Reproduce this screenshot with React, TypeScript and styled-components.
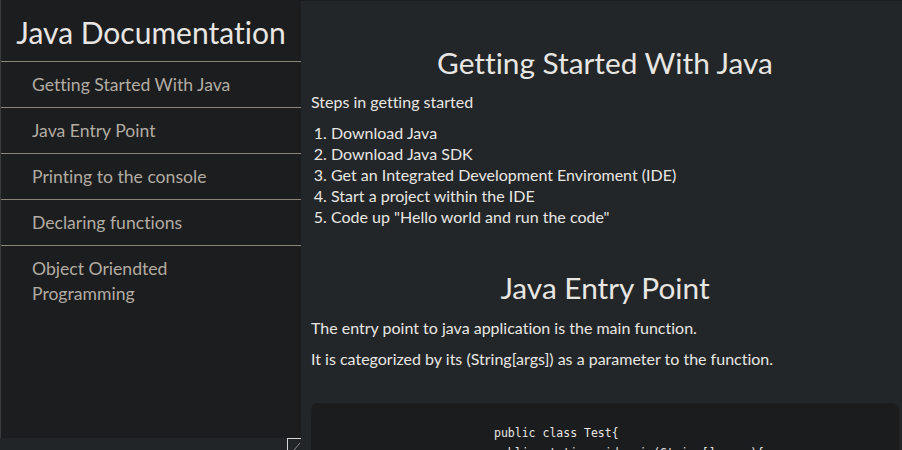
import React from "react";
import styled, { createGlobalStyle } from "styled-components";

const GlobalStyle = createGlobalStyle`
  html, body { margin: 0; padding: 0; height: 100%; overflow: hidden; }
  body {
    background: #232628;
    font-family: Lato, "Open Sans", sans-serif;
    font-variant-ligatures: none;
  }
  #root { height: 100%; }
`;

const Page = styled.div`
  display: flex;
  height: 450px;
  width: 902px;
  overflow: hidden;
`;

const SideColumn = styled.div`
  display: flex;
  flex-direction: column;
  width: 301px;
  flex: none;
  height: 450px;
`;

const Nav = styled.nav`
  flex: 1;
  background: #1c1d1f;
  border-left: 1px solid #3a3b3d;
  box-sizing: border-box;
`;

const NavHeader = styled.header`
  height: 62px;
  display: flex;
  align-items: center;
  justify-content: center;
  color: #e8e6e3;
  font-size: 30px;
  padding-top: 3px;
  box-sizing: border-box;
  border-bottom: 1px solid #8a8378;
`;

const NavLink = styled.a<{ $last?: boolean }>`
  display: block;
  padding: 10px 60px 10px 31px;
  line-height: 25px;
  font-size: 17.6px;
  color: #b2aca2;
  text-decoration: none;
  border-bottom: ${(p) => (p.$last ? "none" : "1px solid #8a8378")};
`;

const ScrollStrip = styled.div`
  height: 12px;
  display: flex;
  justify-content: flex-end;
  background: #222527;
`;

const Grip = styled.div`
  width: 14px;
  height: 12px;
  box-sizing: border-box;
  border-top: 1px solid #d6d6d6;
  border-left: 1px solid #d6d6d6;
  display: flex;
  align-items: flex-end;
  justify-content: flex-end;
`;

const Main = styled.main`
  flex: 1;
  background: #232628;
  border-top: 1px solid #1b1c1e;
  padding: 0 3px 0 10px;
  overflow: hidden;
  color: #e8e6e3;
`;

const Section = styled.section`
  display: flex;
  flex-direction: column;
`;

const Title = styled.h2<{ $first?: boolean }>`
  margin: ${(p) => (p.$first ? "44px 0 10px" : "43px 0 11px")};
  text-align: center;
  font-weight: 400;
  font-size: 29.8px;
  line-height: 36px;
`;

const Para = styled.p`
  margin: 0 0 10px;
  font-size: 16px;
  line-height: 21px;
`;

const Steps = styled.ol`
  margin: 0;
  padding-left: 20px;
  font-size: 16px;
  line-height: 21px;
`;

const Code = styled.pre`
  margin: 24px 0 0;
  background: #1b1c1e;
  border-radius: 7px;
  padding: 20px 20px 20px 183px;
  font-family: "DejaVu Sans Mono", monospace;
  font-size: 11.5px;
  line-height: 20px;
  color: #e8e6e3;
`;

const links = [
  "Getting Started With Java",
  "Java Entry Point",
  "Printing to the console",
  "Declaring functions",
  "Object Oriendted Programming",
];

export default function App() {
  return (
    <>
      <GlobalStyle />
      <Page>
        <SideColumn>
          <Nav>
            <NavHeader>Java Documentation</NavHeader>
            {links.map((l, i) => (
              <NavLink key={l} href="#" $last={i === links.length - 1}>
                {l}
              </NavLink>
            ))}
          </Nav>
          <ScrollStrip>
            <Grip>
              <svg width="10" height="9" viewBox="0 0 10 9">
                <line x1="9" y1="2" x2="3" y2="9" stroke="#8a8a8a" strokeWidth="1" />
              </svg>
            </Grip>
          </ScrollStrip>
        </SideColumn>
        <Main>
          <Section>
            <Title $first>Getting Started With Java</Title>
            <Para>Steps in getting started</Para>
            <Steps>
              <li>Download Java</li>
              <li>Download Java SDK</li>
              <li>Get an Integrated Development Enviroment (IDE)</li>
              <li>Start a project within the IDE</li>
              <li>Code up "Hello world and run the code"</li>
            </Steps>
          </Section>
          <Section>
            <Title>Java Entry Point</Title>
            <Para>The entry point to java application is the main function.</Para>
            <Para>It is categorized by its (String[args]) as a parameter to the function.</Para>
            <Code>{`public class Test{
public static void main(String[] args){
    System.out.println("Hello world");
}
}`}</Code>
          </Section>
        </Main>
      </Page>
    </>
  );
}
